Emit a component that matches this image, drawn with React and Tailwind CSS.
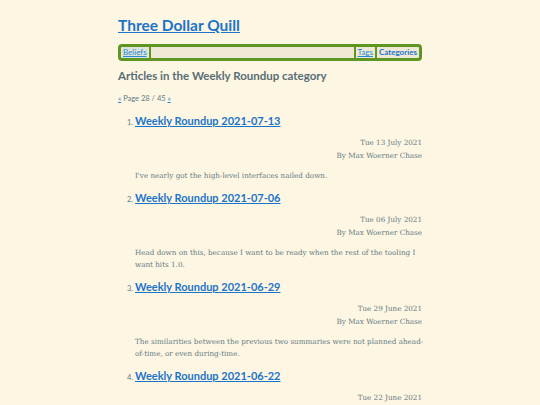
import React from 'react';

const posts = [
  {
    title: 'Weekly Roundup 2021-07-13',
    date: 'Tue 13 July 2021',
    summary: "I've nearly got the high-level interfaces nailed down.",
  },
  {
    title: 'Weekly Roundup 2021-07-06',
    date: 'Tue 06 July 2021',
    summary: 'Head down on this, because I want to be ready when the rest of the tooling I want hits 1.0.',
  },
  {
    title: 'Weekly Roundup 2021-06-29',
    date: 'Tue 29 June 2021',
    summary: 'The similarities between the previous two summaries were not planned ahead-of-time, or even during-time.',
  },
  {
    title: 'Weekly Roundup 2021-06-22',
    date: 'Tue 22 June 2021',
    summary: 'Another week of steady progress on the plumbing.',
  },
];

const sans = "font-['Lato','Noto_Sans',sans-serif]";
const serif = "font-['DejaVu_Serif','Liberation_Serif',serif]";

export default function App() {
  return (
    <div className="h-[405px] overflow-hidden bg-[#fdf6e3] text-[#657b83]">
      <div className="mx-auto w-[304px] pt-[14px]">
        <h1 className={`${sans} text-[15.5px] font-bold leading-[22px]`}>
          <a href="#" className="text-[#1c74c9] underline">Three Dollar Quill</a>
        </h1>

        <nav className={`${sans} mt-[8px] flex h-[17px] items-center rounded-[4px] border-[3px] border-[#5f9622] bg-[#eee8d5] px-[1px] text-[8px] leading-[11px]`}>
          <a href="#" className="bg-[#dce2dc] px-[1px] text-[#268bd2] underline">Beliefs</a>
          <span className="mx-[1px] h-[11px] w-[2px] bg-[#5f9622]" />
          <span className="flex-1" />
          <span className="mx-[1px] h-[11px] w-[2px] bg-[#5f9622]" />
          <a href="#" className="px-[1px] text-[#268bd2] underline">Tags</a>
          <span className="mx-[1px] h-[11px] w-[2px] bg-[#5f9622]" />
          <a href="#" className="px-[1px] font-bold text-[#1c74c9]">Categories</a>
        </nav>

        <h2 className={`${sans} mt-[7px] text-[11.5px] font-bold leading-[16px] text-[#586e75]`}>
          Articles in the Weekly Roundup category
        </h2>

        <p className={`${sans} mt-[10px] text-[7.5px] leading-[10px]`}>
          <a href="#" className="text-[#268bd2] underline">«</a> Page 28 / 45{' '}
          <a href="#" className="text-[#268bd2] underline">»</a>
        </p>

        <ol className="mt-[7px] pl-[17px]">
          {posts.map((p, i) => (
            <li key={i} className="mb-[6.5px]">
              <div className="flex items-baseline">
                <span className={`${sans} -ml-[8px] w-[8px] text-[7.5px]`}>{i + 1}.</span>
                <a href="#" className={`${sans} text-[11px] font-bold leading-[20px] text-[#1c74c9] underline`}>
                  {p.title}
                </a>
              </div>
              <div className={`${serif} mt-[6px] text-right text-[7.2px] leading-[12.5px]`}>
                <div>{p.date}</div>
                <div>By Max Woerner Chase</div>
              </div>
              <p className={`${serif} -mr-[8px] mt-[7.5px] text-[7.2px] leading-[12px]`}>{p.summary}</p>
            </li>
          ))}
        </ol>
      </div>
    </div>
  );
}
